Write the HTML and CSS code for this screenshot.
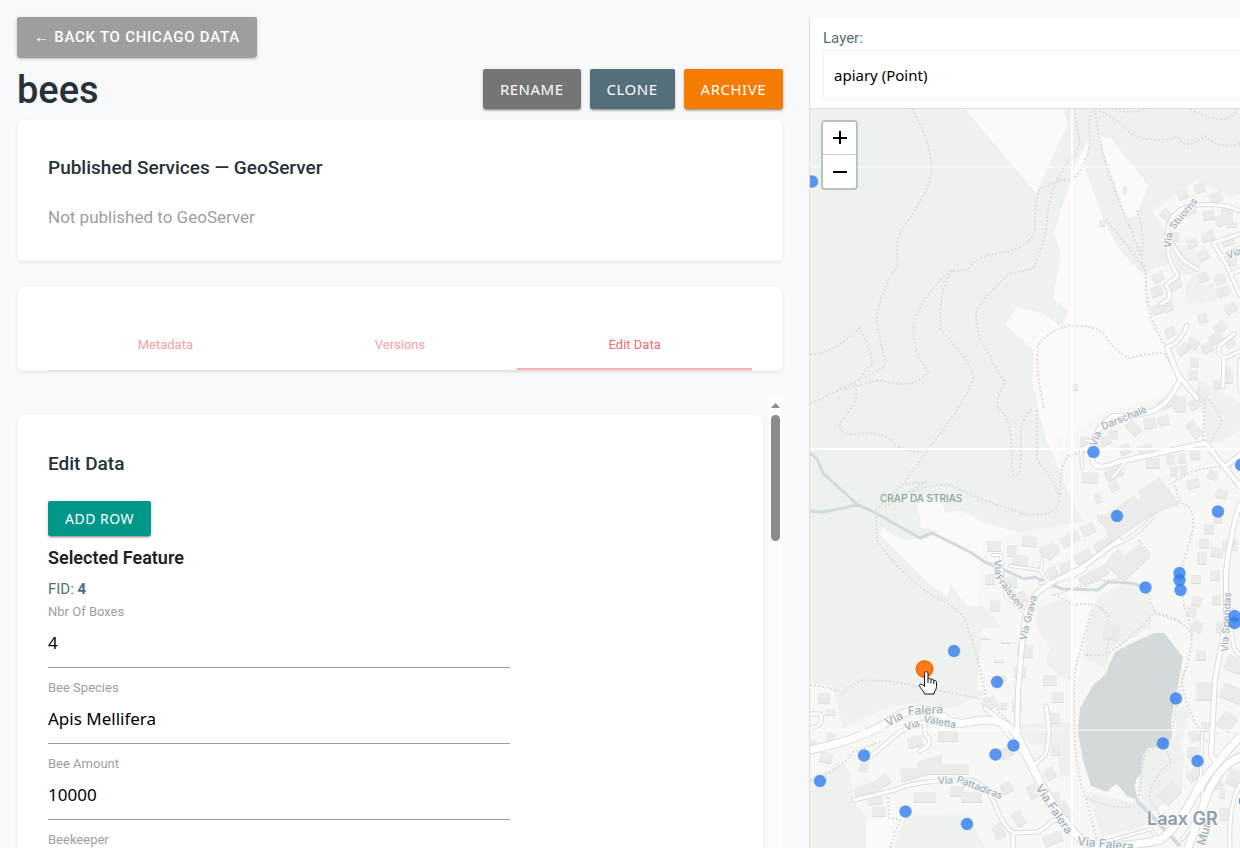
FILE: index.html
```html
<!DOCTYPE html>
<html lang="en">
<head>
<meta charset="utf-8">
<title>bees</title>
<link rel="stylesheet" href="styles.css">
</head>
<body>
<div class="app">
  <main class="panel">
    <div><button class="btn btn-back" type="button">← Back to Chicago Data</button></div>
    <header class="title-row">
      <h1 class="title">bees</h1>
      <div class="actions">
        <button class="btn btn-ui btn-rename" type="button">Rename</button>
        <button class="btn btn-ui btn-clone" type="button">Clone</button>
        <button class="btn btn-ui btn-archive" type="button">Archive</button>
      </div>
    </header>
    <section class="card services">
      <h2 class="card-title">Published Services — GeoServer</h2>
      <p class="muted">Not published to GeoServer</p>
    </section>
    <nav class="card tabs-card">
      <div class="tabs">
        <a class="tab" href="#metadata">Metadata</a>
        <a class="tab" href="#versions">Versions</a>
        <a class="tab active" href="#edit">Edit Data</a>
      </div>
    </nav>
    <div class="scroll">
      <section class="card editor" id="edit">
        <h2 class="card-title">Edit Data</h2>
        <button class="btn btn-ui btn-add" type="button">Add Row</button>
        <h3 class="feature-title">Selected Feature</h3>
        <p class="fid">FID: <strong>4</strong></p>
        <form class="fields">
          <div class="field"><label for="boxes">Nbr Of Boxes</label><input id="boxes" value="4"></div>
          <div class="field"><label for="species">Bee Species</label><input id="species" value="Apis Mellifera"></div>
          <div class="field"><label for="amount">Bee Amount</label><input id="amount" value="10000"></div>
          <div class="field"><label for="keeper">Beekeeper</label><input id="keeper"></div>
        </form>
      </section>
      <div class="scrollbar" aria-hidden="true"><div class="arrow"></div><div class="thumb"></div></div>
    </div>
  </main>
  <aside class="map-side">
    <div class="layer-bar">
      <label class="layer-label" for="layer">Layer:</label>
      <select class="layer-select" id="layer"><option>apiary (Point)</option></select>
    </div>
    <div class="map">
      <svg class="map-art" viewBox="810 109 430 739" preserveAspectRatio="xMinYMin slice" role="img" aria-label="Map of Laax">
        <defs>
          <g id="roads">
            <path class="r8" d="M810 750Q850 742 880 727Q905 709 922 709Q938 711 948 720Q958 726 975 721Q1002 716 1017 735Q1040 784 1055 808Q1073 833 1084 842Q1115 850 1160 840Q1175 830 1190 803Q1204 775 1240 737M1240 757Q1218 766 1206 798L1188 848"/>
            <path class="r5" d="M1017 735L1018 690L1023 635Q1026 605 1034 596Q1045 584 1080 569L1119 540M1167 347L1178 375L1197 398M1180 379Q1170 405 1150 412Q1130 417 1113 416Q1100 422 1094 440Q1089 455 1094 464Q1100 470 1118 462L1205 443L1240 486M1227 465L1240 455M1240 503Q1230 535 1226 572L1226 620L1215 680L1211 755L1216 762"/>
            <path class="r4" d="M1240 211Q1225 203 1195 205Q1173 208 1168 228Q1165 248 1172 265L1178 276L1166 285Q1172 295 1168 300L1161 304M1173 245Q1180 261 1197 269M1240 234L1213 243L1225 262L1240 295M1220 257L1240 248M1233 273L1240 270M1234 334L1219 346Q1217 355 1225 358L1240 351M1224 358L1223 388M1240 360V390M1167 347Q1179 345 1187 325M854 800L895 790Q915 780 970 780Q988 785 996 807Q1005 830 1015 833L1038 832L1056 819M1013 834V848M870 757L900 732Q918 721 938 720M926 722Q922 732 929 739Q932 745 920 751M1046 706Q1052 735 1045 755L1034 765M1000 720L985 708M1000 724L1024 755M810 714H820Q826 724 810 729M1232 610Q1229 650 1240 655M1240 785Q1228 805 1230 848"/>
            <path class="r2" d="M993 555H1001L1002 575L1006 597L1024 612M1040 583Q1072 580 1085 569M1010 566L1040 570L1048 582M1042 561L1041 570M1112 546Q1135 538 1153 517M1112 478L1127 460M1082 468L1081 449L1094 444M1105 842L1151 829L1158 840M1202 733L1201 775L1190 800M1203 780L1202 810L1182 840M1086 440L1102 445"/>
          </g>
        </defs>
        <rect class="green" x="810" y="109" width="430" height="739"/>
        <g class="open">
          <path d="M965 109H1063L1068 124L1036 193Z"/>
          <path d="M1098 136L1111 138L1148 185L1137 216L1127 218Z"/>
          <path d="M1090 137L1075 165L1054 233L1061 253L1053 298L1068 311L1062 327L1040 312L1016 307L1005 325L1034 350L1032 380L1038 408L1046 440L1083 522L1200 450L1180 345L1148 322L1143 275L1117 247L1104 220L1085 170Z"/>
          <path d="M917 502L941 499L945 513L962 510L978 520L1010 530L1025 532L998 575L975 556L940 532L921 527Z"/>
          <path d="M882 528L903 540L930 538L940 531L984 556L990 606L967 606L950 584L948 597L925 580L905 560L880 535Z"/>
        </g>
        <path class="town" d="M1152 211L1197 180L1230 197L1240 194V848H810V682L833 687L843 728L890 706L925 702L950 709L988 693L977 690L982 629L1000 627L990 612L979 604L980 555L985 540L1025 531L1083 522L1060 475L1058 440L1085 425L1100 412L1150 400L1168 392L1180 375L1165 345L1148 322L1143 275L1155 268L1168 265L1170 240Z"/>
        <g class="green">
          <path d="M1172 246L1190 245L1202 263L1187 283L1184 302L1200 304L1218 299L1214 284L1200 285L1192 275L1178 272Z"/>
          <path d="M1198 380L1210 385L1240 403V430L1220 442L1206 442L1204 415L1196 400Z"/>
          <path d="M810 778L843 764L850 772L853 800L866 818V848H810Z"/>
          <path d="M894 848L905 816L968 814L985 848Z"/>
          <path d="M1098 597L1125 583L1145 594L1153 610L1150 628L1112 648L1105 668L1083 657L1088 625Z"/>
          <path d="M1038 608L1060 600L1072 605V680L1058 676L1046 662L1050 648L1035 625Z"/>
          <path d="M1016 724L1070 722V776L1060 776L1056 745L1030 745Z"/>
          <path d="M1144 752L1163 750L1176 735L1176 712L1184 704L1190 712L1180 745L1184 760L1182 790L1162 805L1150 814L1142 800L1138 790Z"/>
          <path d="M1086 792L1137 804L1152 820L1140 828L1102 836Z"/>
        </g>
        <path class="open" d="M866 820L894 815L904 818L892 848H866ZM1052 583L1092 599L1074 700L1072 600Z"/>
        <path class="lake" d="M1154 633H1164L1183 657L1178 685L1171 720L1172 738L1165 746L1148 748L1143 755L1141 774L1136 779L1135 788L1138 800L1127 796L1117 784L1112 787L1107 792L1091 786L1083 760L1078 733L1080 708L1093 685L1105 675L1115 652L1130 644Z"/>
        <g class="stream">
          <path d="M810 453L817 459L823 473L858 505L872 511L920 538L932 533L970 552L985 562L1000 568L1024 579L1035 577L1050 584L1062 589L1098 590L1108 582L1130 583L1145 587"/>
          <path d="M810 511L823 512L858 505"/>
          <path class="outflow" d="M1136 800L1148 812L1180 846"/>
        </g>
        <g class="trail">
          <path d="M912 109Q938 155 929 183Q920 204 903 228Q894 240 898 265Q878 295 877 320Q879 340 886 362L884 367Q860 380 810 404"/>
          <path d="M810 354Q830 356 860 328Q875 360 871 365L860 378M845 389L879 380Q915 391 928 372L919 357Q912 345 914 320Q928 290 950 271L968 270Q976 255 1005 252Q1030 247 1035 230Q1034 200 1040 189Q1055 180 1072 180Q1084 170 1090 145Q1087 110 1095 109"/>
          <path d="M1075 109Q1075 125 1080 142L1075 155Q1063 165 1055 185Q1048 200 1046 230Q1036 267 1032 269L1009 274Q980 300 976 313Q976 340 990 355Q995 370 1005 382Q995 400 998 408Q1010 418 1011 440L1013 474Q1020 480 1021 460L1021 425Q1030 410 1032 409"/>
          <path d="M953 271Q938 285 941 330Q970 360 974 377Q965 400 950 420L903 484L876 510Q877 530 877 540Q900 575 935 597Q962 610 966 622L975 650L987 700L1015 728"/>
          <path d="M856 389Q858 405 840 422Q838 436 855 434Q885 430 895 445Q910 452 922 452M905 484L926 481L885 507M885 507Q930 478 955 487Q980 500 1025 514"/>
          <path d="M1037 410V460Q1058 485 1059 500Q1058 518 1020 514M1060 495Q1060 460 1070 455L1092 451"/>
          <path d="M1095 109Q1100 160 1127 220Q1142 255 1146 275Q1145 320 1168 350L1178 378M1105 220Q1125 240 1146 272M1137 210Q1145 235 1142 255"/>
          <path d="M1095 109Q1115 117 1130 133Q1150 144 1178 137Q1185 152 1205 136Q1220 150 1240 144M1115 109Q1130 115 1145 109M1190 109Q1230 130 1236 109"/>
          <path d="M1044 408Q1035 370 1038 345Q1055 325 1075 326Q1095 325 1105 335Q1115 353 1130 358Q1155 351 1165 354L1178 378"/>
          <path d="M1203 445L1205 400L1197 388Q1210 395 1222 422L1210 442M1170 484L1191 472Q1215 465 1232 467M1175 485L1180 503Q1195 505 1193 530L1180 575L1184 605L1190 625Q1196 640 1182 680Q1183 705 1207 742"/>
          <path d="M810 685Q830 687 843 693Q850 684 863 680Q890 680 920 687L987 700M810 781Q840 770 853 752L880 742M888 797L889 818L900 820L890 848"/>
          <path d="M1092 610Q1080 650 1075 670Q1070 760 1086 798L1099 848M1086 655L1105 655Q1130 640 1154 613Q1180 615 1193 636M1099 607Q1112 614 1109 637L1106 655M1139 540L1150 555Q1125 585 1100 580L1055 595L1075 605Q1100 600 1110 618"/>
          <path d="M1138 800L1145 752L1165 745L1171 762Q1150 780 1149 798L1160 815M1086 798Q1115 810 1135 806M1171 735L1180 688L1185 670M1145 587L1155 613L1180 622"/>
        </g>
        <g class="blocks">
          <path class="w5" d="M1123 190h4M1099 223h6M1072 387h6"/>
          <path class="w8" d="M1162 211l8 6M1178 196l9 -4M1195 189l10 -3M1210 199l12 -4M1185 212l10 -5M1203 216l11 -2M1170 236l9 1M1188 244l9 -3M1202 238l12 -4M1199 257l9 -4M1197 279l11 -4M1215 281l10 -4M1218 293l12 -5M1153 279l10 -5M1151 293l11 -4M1168 288l13 -7M1152 311l11 -4M1164 308l9 -3M1166 334l9 -5M1198 319l9 -3M1188 340l10 6M1178 352l10 -7M1202 350l11 -5M1211 341l10 -7M1215 330l10 -7M1190 362l9 0M1188 375l10 0M1226 345l8 -6M1223 367v0M1228 371v12M1218 380l0 8M1226 311l10 -6M1190 407l9 -6M1158 422l11 -3M1113 430v8M1080 441l9 1M1102 442l8 -4M1120 451l10 -4M1138 451l14 -5M1190 455l10 -1M1166 459l9 0M1178 458l8 0M1170 471l8 0M1180 470l7 0M1110 488l8 -4M1095 499l7 -2M1102 514l0 6M1187 485l12 -3M1208 473l9 3M1216 492l11 3M1204 529l10 0M1213 518l9 0M1199 543l10 0M1202 552v12M1215 570v10M1211 551l12 2M1196 575v8M1212 600l9 0M1192 600l9 2M1187 610l9 3"/>
          <path class="w10" d="M1170 393l8 13M1189 422l10 14M1128 422l11 11M1144 424l12 -2M1160 406l12 -7M1191 240v2M1216 222l13 -5M1232 222v5M1222 242l12 -4M1232 257v8M1196 393l10 6M1082 477l16 1M1106 477l16 -8M1146 463l14 0M1022 540l15 2M1040 552l18 -4M1062 543l16 -9M1082 532l12 -6M1095 549l16 -8M1075 560l16 -8M1012 559l16 2M1060 569l12 -4M1048 574l9 -4M987 546h14M1012 545v11M985 579h10M1003 582h14M990 605l10 1M1016 598l10 -3M985 638v1M1006 642v1M999 660v2M1001 675v6M983 707l13 -7M1002 703v6M1012 706h10M1014 672h12M1017 650h14M1028 645v12M1043 680h14M1052 697h12M1050 718h10M1051 750h9M1047 768l6 10M1044 800l16 -4M1030 785l6 12M1000 755l12 -6M1002 790l10 -5M996 825l6 12M1015 812l8 12M1060 802l10 15M1044 842l18 -7M818 698h12M830 709v6M812 740v6M826 738l9 0M820 756l12 3M860 765l8 2M855 794l18 -8M874 787l15 -10M868 800l14 -2M872 811h14M914 797h22M950 791h14M962 797h20M908 743l14 -3M938 736h20M1192 624l10 4M1196 655l10 0M1216 627h10M1206 722v9M1190 737l12 -4M1187 752h11M1188 778l12 -8M1212 775l8 12M1219 793h6M1224 820v-12"/>
          <path class="w14" d="M1221 216h12M1175 404h11M1104 630l14 3M1047 548l8 6M1204 700v-18M1222 728l10 -14M1226 661l16 6M1222 689l20 8M1232 785l6 -14M1163 800l14 -14M1230 550v-10"/>
          <path d="M1098 520L1134 495L1142 503L1138 491L1160 477L1179 503L1150 515L1120 536L1112 543L1105 525ZM1105 563L1118 548L1124 556L1139 544L1150 556L1124 581ZM900 768H917V762L942 754V764H969V774H926L902 782ZM1078 578L1107 563L1109 573L1084 585ZM1223 367h8v6h-8Z"/>
        </g>
        <use class="road-casing" href="#roads"/>
        <use class="road-fill" href="#roads"/>
        <path class="tiles" d="M1072 109V848M810 449H1240"/>
        <path class="tiles thin" d="M810 167H1240M810 730H1240"/>
        <g class="street">
          <text transform="translate(1171 248) rotate(-84)">Via</text>
          <text transform="translate(1174 230) rotate(-50)">Stuorns</text>
          <text transform="translate(1096 447) rotate(-68)">Via</text>
          <text transform="translate(1103 430) rotate(-22)">Darschalè</text>
          <text transform="translate(994 560) rotate(86)">Via</text>
          <text transform="translate(995 578) rotate(52)">Fraissen</text>
          <text transform="translate(1026 641) rotate(-76)">Via Grava</text>
          <text class="big" transform="translate(888 727) rotate(-29)">Via</text>
          <text class="big" transform="translate(908 715) rotate(-3)">Falera</text>
          <text transform="translate(906 731) rotate(-20)">Via</text>
          <text transform="translate(923 722) rotate(11)">Valetta</text>
          <text transform="translate(938 784) rotate(-2)">Via</text>
          <text transform="translate(956 782) rotate(21)">Pattadiras</text>
          <text class="big" transform="translate(1035 788) rotate(56)">Via Falera</text>
          <text class="big" transform="translate(1077 845) rotate(6)">Via Falera</text>
          <text transform="translate(1228 652) rotate(-87)">Via Spendas</text>
          <text transform="translate(1228 259) rotate(-20)">Via</text>
          <text class="big" transform="translate(1205 846) rotate(-75)">Mun</text>
        </g>
        <text class="forest" x="880" y="502">CRAP DA STRIAS</text>
        <text class="place" x="1147" y="825">Laax GR</text>
        <g class="pins">
          <circle cx="812" cy="181.500" r="6"/><circle cx="1093.500" cy="452" r="6"/><circle cx="1117" cy="516" r="6"/><circle cx="1218" cy="511.500" r="6"/><circle cx="1241" cy="465" r="6"/>
          <circle cx="1179.500" cy="573" r="6"/><circle cx="1179.500" cy="580" r="6"/><circle cx="1180.500" cy="590" r="6"/><circle cx="1145.500" cy="587.500" r="6"/>
          <circle cx="1234.500" cy="616" r="6"/><circle cx="1234.500" cy="623" r="6"/><circle cx="954" cy="651" r="6"/><circle cx="997" cy="682" r="6"/>
          <circle cx="1013.500" cy="745.500" r="6"/><circle cx="995.500" cy="754.500" r="6"/><circle cx="864" cy="755.500" r="6"/><circle cx="820" cy="781" r="6"/>
          <circle cx="905.500" cy="811.500" r="6"/><circle cx="967" cy="824" r="6"/><circle cx="1176" cy="698.500" r="6"/><circle cx="1163" cy="743.500" r="6"/><circle cx="1197.500" cy="761" r="6"/><circle cx="1245" cy="801" r="6"/>
        </g>
        <circle class="pin-selected" cx="924.500" cy="669" r="8"/>
        <path class="hand" d="M924.500 673.500C924.500 671 928 671 928 673.500V679.500C928.500 677.500 931 678 931 680C931.500 678.500 933.800 679 933.800 681C934.500 679.800 936.500 680.500 936.500 682.500V686.500C936.500 690 934 691 934 694H924.500C924 691 920 688.500 919.500 685.500C919.500 683.500 922.500 683.500 924.500 686.500Z"/>
        <path class="hand" d="M928 679.500V683M931 680V683.500M933.800 681V684"/>
      </svg>
      <div class="zoom">
        <button class="zoom-btn" type="button" aria-label="Zoom in"><svg width="14" height="14" viewBox="0 0 14 14"><path d="M0 7H14M7 0V13"/></svg></button>
        <button class="zoom-btn" type="button" aria-label="Zoom out"><svg width="14" height="14" viewBox="0 0 14 14"><path d="M0 7H14"/></svg></button>
      </div>
    </div>
  </aside>
</div>
</body>
</html>
```
FILE: styles.css
```css
* { box-sizing: border-box; }
body {
  margin: 0;
  background: #f8f9fb;
  color: #263238;
  font-family: Roboto, "Liberation Sans", sans-serif;
}
h1, h2, h3, p { margin: 0; }
button, input, select { font-family: "Noto Sans", "Open Sans", sans-serif; }

.app {
  display: grid;
  grid-template-columns: minmax(0, 809fr) minmax(0, 431fr);
  height: 100vh;
  overflow: hidden;
}
.panel {
  display: flex;
  flex-direction: column;
  min-height: 0;
  padding: 17px 26px 0 17px;
}

.btn {
  display: inline-block;
  height: 40px;
  padding: 0 17px;
  border: 0;
  border-radius: 2px;
  color: #fff;
  font-size: 16px;
  text-transform: uppercase;
  letter-spacing: 0.5px;
  white-space: nowrap;
  box-shadow: 0 2px 2px rgba(0, 0, 0, 0.14), 0 1px 5px rgba(0, 0, 0, 0.12), 0 3px 1px -2px rgba(0, 0, 0, 0.2);
}
.btn-back {
  display: block;
  background: #9e9e9e;
  font-family: Roboto, sans-serif;
  font-size: 15px;
  font-weight: 500;
  letter-spacing: 0.05em;
}
.btn-ui { font-size: 15px; }
.btn-rename { background: #757575; }
.btn-clone { background: #546e7a; }
.btn-archive { background: #f57c00; }
.btn-add {
  height: 35px;
  margin-top: 21px;
  background: #009688;
  font-size: 14px;
}

.title-row {
  display: flex;
  justify-content: space-between;
  align-items: center;
  height: 40px;
  margin: 12px 0 11px;
}
.title { padding-top: 2px; font-size: 38px; font-weight: 500; line-height: 40px; }
.actions { display: flex; gap: 9px; }

.card {
  border-radius: 7px;
  background: #fff;
  box-shadow: 0 1px 3px rgba(0, 0, 0, 0.1);
}
.card-title { font-size: 19px; font-weight: 500; line-height: 32px; }
.services { padding: 32px 31px 31px; }
.muted { margin-top: 20px; color: #9e9e9e; font-size: 17px; line-height: 26px; }

.tabs-card { margin-top: 26px; padding: 31px 31px 1px; }
.tabs { display: flex; height: 52px; box-shadow: 0 1px 0 #e0e0e0; }
.tab {
  flex: 1;
  border-bottom: 2px solid transparent;
  color: #f4a0a4;
  font-size: 13px;
  line-height: 54px;
  height: 52px;
  text-align: center;
  text-decoration: none;
}
.tab.active { border-color: #f6b2b5; color: #ee6e73; }

.scroll {
  display: flex;
  flex: 1;
  gap: 5px;
  min-height: 0;
  margin: 26px 0 0 -17px;
  padding-left: 17px;
  overflow: hidden;
}
.editor { flex: 1; align-self: flex-start; margin-top: 18px; padding: 33px 31px; }
.feature-title { margin-top: 8px; color: #212121; font-size: 18px; font-weight: 600; line-height: 28px; }
.fid { margin-top: 7px; color: #546e7a; font-size: 15px; line-height: 20px; }
.fields { display: flex; flex-direction: column; gap: 10px; width: 67.6%; margin-top: 3px; }
.field { display: flex; flex-direction: column; }
.field label { color: #9e9e9e; font-size: 13px; line-height: 20px; }
.field input {
  height: 46px;
  padding: 0 0 4px;
  border: 0;
  border-bottom: 1px solid #9e9e9e;
  background: transparent;
  color: #000;
  font-size: 17px;
}
.scrollbar { width: 15px; padding: 6px 3px; background: #fcfcfc; }
.arrow {
  height: 5px;
  background: #8b8b8b;
  clip-path: polygon(50% 0, 100% 100%, 0 100%);
}
.thumb { height: 126px; margin-top: 7px; border-radius: 5px; background: #8b8b8b; }

.map-side {
  display: flex;
  flex-direction: column;
  margin-top: 17px;
  border-left: 1px solid #dcdee0;
  overflow: hidden;
}
.layer-bar {
  display: flex;
  flex-direction: column;
  padding: 10px 0 8px 13px;
  border-bottom: 1px solid #e0e0e0;
  background: #fff;
}
.layer-label { color: #546e7a; font-size: 15px; line-height: 23px; }
.layer-select {
  appearance: none;
  height: 50px;
  padding: 0 10px;
  border: 1px solid #f2f2f2;
  border-right: 0;
  border-radius: 2px 0 0 2px;
  background: #fff;
  color: #000;
  font-size: 15px;
}
.map { position: relative; flex: 1; min-height: 0; overflow: hidden; }
.map-art { display: block; width: 100%; height: 100%; }

.zoom {
  position: absolute;
  top: 11px;
  left: 11px;
  border: 2px solid rgba(0, 0, 0, 0.2);
  border-radius: 4px;
  background-clip: padding-box;
}
.zoom-btn {
  display: grid;
  place-items: center;
  width: 33px;
  height: 33px;
  padding: 0;
  border: 0;
  border-radius: 0 0 2px 2px;
  background: #fff;
}
.zoom-btn:first-child { border-bottom: 1px solid #ccc; border-radius: 2px 2px 0 0; }
.zoom-btn path { stroke: #000; stroke-width: 2; }

.green { fill: #edf2ee; }
.open { fill: #fafaf8; }
.town { fill: #f7f7f5; }
.lake { fill: #d4dadc; }
.stream path { fill: none; stroke: #d1dadf; stroke-width: 3; stroke-linejoin: round; }
.stream .outflow { stroke-width: 4; }
.trail path { fill: none; stroke: #dcdedb; stroke-width: 2; stroke-dasharray: 2 2; }
.blocks { fill: #ebebea; stroke: #ebebea; stroke-width: 0; filter: drop-shadow(0 1px 0 #dededd); }
.blocks .w5 { fill: none; stroke-width: 6; }
.blocks .w8 { fill: none; stroke-width: 9; }
.blocks .w10 { fill: none; stroke-width: 10; }
.blocks .w14 { fill: none; stroke-width: 15; }
.road-casing { stroke: #dcdddc; --edge: 2px; }
.road-fill { stroke: #fff; --edge: 0px; }
#roads path { fill: none; stroke-linecap: round; stroke-linejoin: round; }
#roads .r8 { stroke-width: calc(7px + var(--edge, 0px)); }
#roads .r5 { stroke-width: calc(4px + var(--edge, 0px)); }
#roads .r4 { stroke-width: calc(3px + var(--edge, 0px)); }
#roads .r2 { stroke-width: calc(2px + var(--edge, 0px)); }
.tiles { fill: none; stroke: #fff; stroke-width: 2; }
.tiles.thin { stroke-width: 1; }

.street {
  fill: #a4b1bc;
  stroke: #f7f8f7;
  stroke-width: 2px;
  paint-order: stroke;
  font: 500 10px Inter, sans-serif;
}
.street .big { font-size: 12px; }
.forest { fill: #8ba794; font: 500 10px Inter, sans-serif; }
.place { fill: #8f9eab; stroke: #f7f8f7; stroke-width: 2px; paint-order: stroke; font: 600 18px Inter, sans-serif; }
.pins circle { fill: #2f7ded; fill-opacity: 0.8; stroke: #3b82f6; stroke-opacity: 0.3; }
.pin-selected { fill: #ff7a1a; stroke: #ff6d00; stroke-width: 2; }
.hand { fill: #fff; stroke: #111; stroke-width: 1; stroke-linejoin: round; }
```
